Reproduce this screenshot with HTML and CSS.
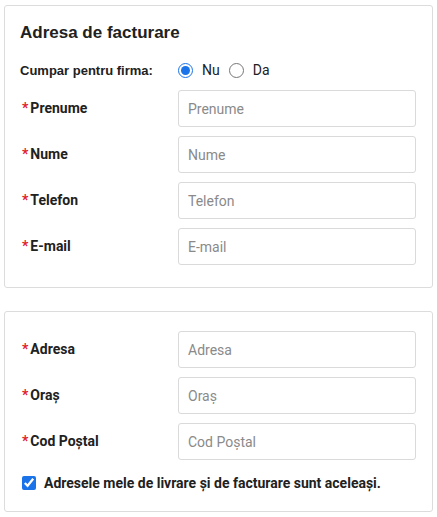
FILE: index.html
```html
<!DOCTYPE html>
<html lang="ro">
<head>
  <meta charset="UTF-8">
  <meta name="viewport" content="width=device-width, initial-scale=1.0">
  <title>Adresa de facturare</title>
  <link rel="stylesheet" href="styles.css">
</head>
<body>
  <!-- Date client -->
  <div class="card">
    <h2 class="card-title">Adresa de facturare</h2>
    <div class="row row-radio">
      <span class="label plain">Cumpar pentru firma:</span>
      <div class="radios">
        <label class="radio"><input type="radio" name="firma" checked> Nu</label>
        <label class="radio"><input type="radio" name="firma"> Da</label>
      </div>
    </div>
    <div class="row">
      <label class="label"><span class="req">*</span>Prenume</label>
      <input class="field" type="text" placeholder="Prenume">
    </div>
    <div class="row">
      <label class="label"><span class="req">*</span>Nume</label>
      <input class="field" type="text" placeholder="Nume">
    </div>
    <div class="row">
      <label class="label"><span class="req">*</span>Telefon</label>
      <input class="field" type="text" placeholder="Telefon">
    </div>
    <div class="row">
      <label class="label"><span class="req">*</span>E-mail</label>
      <input class="field" type="text" placeholder="E-mail">
    </div>
  </div>

  <!-- Adresa -->
  <div class="card card-address">
    <div class="row">
      <label class="label"><span class="req">*</span>Adresa</label>
      <input class="field" type="text" placeholder="Adresa">
    </div>
    <div class="row">
      <label class="label"><span class="req">*</span>Oraș</label>
      <input class="field" type="text" placeholder="Oraș">
    </div>
    <div class="row">
      <label class="label"><span class="req">*</span>Cod Poștal</label>
      <input class="field" type="text" placeholder="Cod Poștal">
    </div>
    <label class="same">
      <input type="checkbox" checked>
      Adresele mele de livrare și de facturare sunt aceleași.
    </label>
  </div>
</body>
</html>
```

FILE: styles.css
```css
/* Baza */
body {
  margin: 0;
  padding: 5px 4px;
  font-family: Roboto, "Liberation Sans", Arial, sans-serif;
  color: #212121;
  background: #fff;
}

.card {
  border: 1px solid #dcdcdc;
  border-radius: 3px;
  padding: 16px 16px 22px 15px;
  width: 429px;
  box-sizing: border-box;
}

.card-address {
  margin-top: 23px;
  padding-top: 19px;
  padding-bottom: 20px;
}

.card-title {
  font-family: "Liberation Sans", Arial, sans-serif;
  font-size: 17px;
  font-weight: bold;
  margin: 0 0 16px 0;
  line-height: 22px;
}

/* Randuri */
.row {
  display: flex;
  align-items: center;
  margin-bottom: 9px;
}

.row:last-child {
  margin-bottom: 0;
}

.row-radio {
  margin-bottom: 10px;
  height: 20px;
}

.label {
  width: 158px;
  font-size: 14px;
  font-weight: bold;
  margin-top: -1px;
}

.label.plain {
  font-family: "Liberation Sans", Arial, sans-serif;
  font-size: 13px;
  margin-top: 0;
}

.req {
  color: #e0202c;
  margin: 0 2px 0 2px;
}

.radios {
  display: flex;
  gap: 9px;
  font-size: 14px;
}

.radio {
  display: flex;
  align-items: center;
  gap: 9px;
}

.radio input {
  margin: 0;
  width: 15px;
  height: 15px;
  accent-color: #1a73e8;
}

.field {
  width: 238px;
  height: 37px;
  box-sizing: border-box;
  border: 1px solid #dadada;
  border-radius: 3px;
  padding: 0 9px;
  font-family: Roboto, "Liberation Sans", Arial, sans-serif;
  font-size: 14px;
  color: #333;
}

.field::placeholder {
  color: #8a8a8a;
}

/* Checkbox */
.same {
  display: flex;
  align-items: center;
  gap: 8px;
  margin-top: 15px;
  padding-left: 2px;
  font-size: 14px;
  font-weight: bold;
}

.same input {
  margin: 0;
  width: 14px;
  height: 14px;
  accent-color: #1a73e8;
}
```
